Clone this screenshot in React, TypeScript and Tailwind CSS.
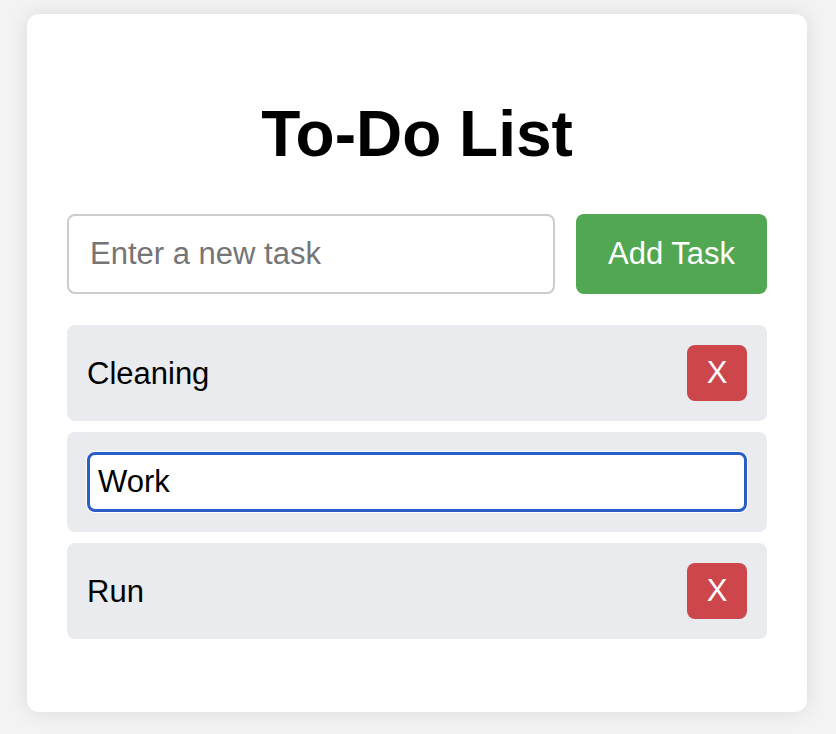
import React from "react";

export default function App() {
  const font = { fontFamily: '"Liberation Sans", Arial, Helvetica, sans-serif' };
  return (
    <div className="min-h-screen bg-[#f3f3f3] pt-[14px] pb-[22px] flex justify-center" style={font}>
      <div className="w-[780px] ml-[-2px] bg-white rounded-[12px] shadow-[0_0_20px_rgba(0,0,0,0.1)] px-[40px] pt-[40px] pb-[40px] flex flex-col">
        <h1 className="mt-[44px] mb-[44px] h-[72px] leading-[72px] text-[64px] font-bold text-black text-center">
          To-Do List
        </h1>
        <div className="flex gap-[21px] h-[80px]">
          <input
            type="text"
            placeholder="Enter a new task"
            className="flex-1 min-w-0 h-[80px] border-2 border-[#cccccc] rounded-[8px] px-[21px] text-[31px] text-black placeholder:text-[#757575] outline-none bg-white"
            style={font}
          />
          <button className="w-[191px] h-[80px] bg-[#52a752] text-white text-[31px] rounded-[8px]" style={font}>
            Add Task
          </button>
        </div>
        <ul className="mt-[31px] mb-[33px] flex flex-col gap-[11px]">
          <li className="h-[96px] bg-[#eaebef] rounded-[8px] px-[20px] flex items-center justify-between">
            <span className="text-[31px] text-black leading-none">Cleaning</span>
            <button className="w-[60px] h-[56px] bg-[#cd464c] text-white text-[31px] rounded-[8px] flex items-center justify-center" style={font}>
              X
            </button>
          </li>
          <li className="h-[100px] bg-[#eaebef] rounded-[8px] px-[20px] flex items-center">
            <input
              type="text"
              defaultValue="Work"
              className="w-full h-[60px] border-[3px] border-[#2a5ec6] rounded-[8px] px-[8px] text-[31px] text-black bg-white outline-none shadow-[0_0_0_1px_#ffffff]"
              style={font}
            />
          </li>
          <li className="h-[96px] bg-[#eaebef] rounded-[8px] px-[20px] flex items-center justify-between">
            <span className="text-[31px] text-black leading-none">Run</span>
            <button className="w-[60px] h-[56px] bg-[#cd464c] text-white text-[31px] rounded-[8px] flex items-center justify-center" style={font}>
              X
            </button>
          </li>
        </ul>
      </div>
    </div>
  );
}
